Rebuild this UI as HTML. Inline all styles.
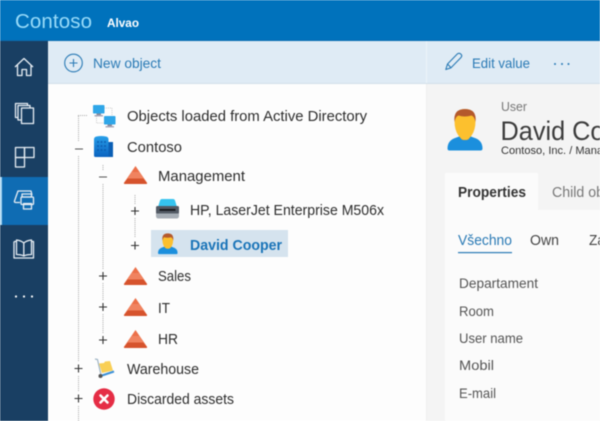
<!DOCTYPE html>
<html><head><meta charset="utf-8"><style>
html,body{margin:0;padding:0;width:600px;height:421px;overflow:hidden;background:#fff}
svg{display:block;filter:blur(.45px)}
text{font-family:"Liberation Sans",sans-serif;fill:#2d2d2d}
</style></head><body>
<svg width="600" height="421" viewBox="0 0 600 421" xmlns="http://www.w3.org/2000/svg">
<defs>
<linearGradient id="bl" x1="0" y1="0" x2="0" y2="1"><stop offset="0" stop-color="#28a0ea"/><stop offset="1" stop-color="#0a62c0"/></linearGradient>
<g id="tr"><path d="M11.500 0 L23 16.800 Q23.500 18 22 18 L1 18 Q-.5 18 0 16.800Z" fill="#ec7049"/><path d="M7.700 6 L15.300 6 L19.500 12.500 L3.500 12.500Z" fill="#f08360"/><path d="M3.800 12.500 L19.200 12.500 L23 17 Q23 18 22 18 L1 18 Q0 18 0 17Z" fill="#d6532d"/></g>
<g id="pm"><path d="M0 0H8M4 -4V4" stroke="#333" stroke-width="1.100" fill="none"/></g>
<g id="mon"><rect x="0" y="0" width="11.500" height="8.500" rx=".8" fill="#2fa6e8"/><rect x="3.500" y="8.500" width="4.500" height="1.500" fill="#889"/><rect x="1.500" y="10" width="8.500" height="1.500" fill="#aab"/></g>
</defs>
<rect width="600" height="421" fill="#fdfdfd"/>
<rect width="600" height="41" fill="#0072bc"/>
<rect y="40" width="600" height="1" fill="#0a6cb0"/>
<text x="15" y="28" font-size="20.500" style="fill:#98dbf9" textLength="77" lengthAdjust="spacing">Contoso</text>
<text x="107" y="27" font-size="12" font-weight="bold" style="fill:#fff" textLength="32" lengthAdjust="spacingAndGlyphs">Alvao</text>

<!-- sidebar -->
<rect y="41" width="48" height="380" fill="#193f63"/>
<rect y="177" width="48" height="48" fill="#0f6cb3"/>
<rect y="177" width="2" height="48" fill="#a9d6f2"/>
<g fill="none" stroke="#e8eef4" stroke-width="1.300" stroke-linejoin="round">
<path d="M15 67 L24 58.500 L33 67 M17.500 65 V75.500 H22 V69.500 H26.500 V75.500 H31 V65"/>
<path d="M18.500 117.500 H15.500 V103.500 H27.500 V105"/>
<path d="M21 120 H18 V105.500 H30 V107.500"/>
<rect x="21.500" y="108" width="12" height="15.500" fill="#193f63"/>
<rect x="15.500" y="147.500" width="9" height="10"/><rect x="24.500" y="147.500" width="9.500" height="10"/><rect x="15.500" y="157.500" width="9" height="9.500"/>
<path d="M14.500 201 L18 191 H31 L32 195 M14.500 201 Q14 202.500 16 202.500 H20"/>
<rect x="21" y="197" width="12.500" height="7.500" rx="1"/><rect x="22" y="194" width="9.500" height="3"/><rect x="23.500" y="203.500" width="8" height="5.500"/>
<path d="M14 241.500 H16 M14 241.500 V258 H33.500 V241.500 H31.500 M23.800 256 V243 Q21 240.500 16.500 240 V254.500 Q21 254.500 23.800 256 Q26.500 254.500 31.500 254.500 V240 Q26.500 240.500 23.800 243"/>
</g>
<circle cx="16" cy="296.500" r="1.100" fill="#fff"/><circle cx="24" cy="296.500" r="1.100" fill="#fff"/><circle cx="32" cy="296.500" r="1.100" fill="#fff"/>

<!-- toolbar -->
<rect x="48" y="41" width="552" height="42" fill="#dfebf5"/>
<rect x="48" y="83" width="552" height="1" fill="#d3e0ea"/>
<rect x="426" y="41" width="1" height="42" fill="#ecf3f9"/>
<circle cx="73.500" cy="63" r="8.800" fill="none" stroke="#2a7ab5" stroke-width="1.100"/>
<path d="M73.500 59V67M69.500 63H77.500" stroke="#2a7ab5" stroke-width="1.100"/>
<text x="93" y="68" font-size="14" style="fill:#2a7ab5" textLength="68" lengthAdjust="spacingAndGlyphs">New object</text>
<path d="M445.800 69.500 L447.500 64 L457.500 53.800 Q459 52.800 460.500 53.800 L461.300 54.600 Q462.300 56 461 57.500 L451 67.800Z M447.500 64 L451 67.800" fill="none" stroke="#2a7ab5" stroke-width="1.100" stroke-linejoin="round"/>
<text x="472" y="68" font-size="14" style="fill:#2a7ab5" textLength="58" lengthAdjust="spacingAndGlyphs">Edit value</text>
<circle cx="555" cy="64" r="1" fill="#2a7ab5"/><circle cx="562" cy="64" r="1" fill="#2a7ab5"/><circle cx="568.500" cy="64" r="1" fill="#2a7ab5"/>

<!-- right panel -->
<rect x="427" y="84" width="173" height="337" fill="#f4f4f4"/>
<rect x="426" y="84" width="1" height="337" fill="#efefef"/>
<rect x="445" y="173" width="93" height="40" fill="#fbfbfb"/>
<rect x="445" y="210" width="155" height="211" fill="#fbfbfb"/>
<g transform="translate(447.500,108)">
<path d="M0 40.500 Q0 32 9 29.500 L13 28 H22 L26 29.500 Q35 32 35 40.500 Q35 42.500 33 42.500 H2 Q0 42.500 0 40.500Z" fill="#1b8fdd"/>
<rect x="13" y="26" width="9" height="6" rx="3" fill="#f2a82c"/>
<path d="M7 13 Q7 1 17.500 1 Q28 1 28 13 Q28 24 22 30 Q17.500 34 13 30 Q7 24 7 13Z" fill="#fcc02e"/>
<path d="M7 14 Q5.500 1 17.500 1 Q29.500 1 28 14 Q27 8.500 24 7.500 Q17 9.500 11 7.500 Q8 8.500 7 14Z" fill="#b4592c"/>
</g>
<text x="501" y="111" font-size="13" style="fill:#777" textLength="26" lengthAdjust="spacingAndGlyphs">User</text>
<text x="500.500" y="140" font-size="26.500" style="fill:#3c3c3c" textLength="104" lengthAdjust="spacingAndGlyphs">David Co</text>
<text x="501" y="154" font-size="11" style="fill:#333" textLength="102" lengthAdjust="spacingAndGlyphs">Contoso, Inc. / Mana</text>
<text x="458" y="197" font-size="14.500" font-weight="bold" style="fill:#333" textLength="68" lengthAdjust="spacingAndGlyphs">Properties</text>
<text x="552" y="197" font-size="14.500" style="fill:#777" textLength="52" lengthAdjust="spacingAndGlyphs">Child ob</text>
<text x="458" y="245" font-size="14.500" style="fill:#2a7ab5" textLength="54" lengthAdjust="spacingAndGlyphs">Všechno</text>
<rect x="458" y="252" width="54" height="1.200" fill="#2a7ab5"/>
<text x="530" y="245" font-size="14.500" style="fill:#444" textLength="29" lengthAdjust="spacingAndGlyphs">Own</text>
<text x="589" y="245" font-size="14.500" style="fill:#444" textLength="16" lengthAdjust="spacingAndGlyphs">Za</text>
<g font-size="14">
<text x="459" y="288" style="fill:#555" textLength="79" lengthAdjust="spacingAndGlyphs">Departament</text>
<text x="459" y="316" style="fill:#555" textLength="35" lengthAdjust="spacingAndGlyphs">Room</text>
<text x="459" y="343" style="fill:#555" textLength="64" lengthAdjust="spacingAndGlyphs">User name</text>
<text x="459" y="370" style="fill:#555" textLength="35" lengthAdjust="spacingAndGlyphs">Mobil</text>
<text x="459" y="398" style="fill:#555" textLength="37" lengthAdjust="spacingAndGlyphs">E-mail</text>
</g>

<!-- tree lines -->
<g stroke="#aaa" stroke-width="1" stroke-dasharray="1 1" fill="none">
<path d="M78.500 116V141M78.500 156V361M78.500 376V391M78.500 406V421M78 115.500H87"/>
<path d="M103 165V170M103 184V269M103 283V300M103 314V333"/>
<path d="M135 195V204M135 218V238"/>
<path d="M104 108H112V116M96.500 116V123H104" stroke="#ccc"/>
</g>
<!-- expanders -->
<path d="M75 149H83M99 177H107" stroke="#555" stroke-width="1.100"/>
<use href="#pm" x="131" y="211"/><use href="#pm" x="131" y="245.500"/>
<use href="#pm" x="99" y="276"/><use href="#pm" x="99" y="307"/><use href="#pm" x="99" y="340"/>
<use href="#pm" x="74.500" y="368.500"/><use href="#pm" x="74.500" y="398.500"/>

<!-- tree icons -->
<use href="#mon" x="93" y="105"/><use href="#mon" x="104" y="116"/>
<path d="M94 155.500 V139.500 Q94 137 96.500 136.500 Q101 135.500 106 136.500 Q108.500 137 108.500 139.500 V142 H113 V157 H95.500 Q94 157 94 155.500Z" fill="url(#bl)"/>
<rect x="108.500" y="142" width="4.500" height="15" fill="#0b5fb5"/>
<g fill="#0a58ad" opacity=".7"><rect x="97" y="141" width="2" height="2"/><rect x="100.500" y="141" width="2" height="2"/><rect x="104" y="141" width="2" height="2"/><rect x="97" y="145" width="2" height="2"/><rect x="100.500" y="145" width="2" height="2"/><rect x="104" y="145" width="2" height="2"/><rect x="97" y="149" width="2" height="2"/><rect x="100.500" y="149" width="2" height="2"/><rect x="104" y="149" width="2" height="2"/></g>
<use href="#tr" x="124" y="166"/>
<use href="#tr" x="124" y="267"/>
<use href="#tr" x="124" y="298"/>
<use href="#tr" x="124" y="330"/>
<!-- printer -->
<path d="M158 207 L160 200.500 Q160.500 199 162 199 H173 Q174.500 199 175 200.500 L177 207Z" fill="#35c3ef"/>
<rect x="156" y="206" width="23" height="8" rx="1.500" fill="#535a65"/>
<rect x="159.500" y="209" width="16" height="1.800" fill="#15181c"/>
<path d="M156 213.500 H179 V216 Q179 218.500 176.500 218.500 H158.500 Q156 218.500 156 216Z" fill="#a6adb5"/>
<!-- selected row -->
<rect x="151" y="230" width="137" height="27" fill="#d5e3ee"/>
<g transform="translate(158,234.500) scale(.56)">
<path d="M0 33 Q0 25 9 22.500 L13 21 H22 L26 22.500 Q35 25 35 33 Q35 35 33 35 H2 Q0 35 0 33Z" fill="#1b8fdd"/>
<path d="M8 10 Q8 -1 17.500 -1 Q27 -1 27 10 Q27 19 22 24 Q17.500 27 13 24 Q8 19 8 10Z" fill="#fcc02e"/>
<path d="M8 11 Q6 -2 17.500 -2 Q29 -2 27 11 Q26 6 23 5 Q17 6.500 11 5 Q9 6 8 11Z" fill="#b4592c"/>
</g>
<!-- warehouse -->
<path d="M95 359 L97.500 359.500 L101 375" stroke="#9eb4c4" stroke-width="1.200" fill="none"/>
<path d="M99 363.500 L104 363 L105 361.500 L110 361 L113 370.500 L102 373Z" fill="#f9cf55"/>
<path d="M100.500 376 L114 371.500" stroke="#3d91d8" stroke-width="2" fill="none"/>
<circle cx="100.500" cy="376" r="2" fill="#555"/>
<!-- discarded -->
<circle cx="104" cy="399" r="10.700" fill="#e52d45"/>
<path d="M100.500 395.500L107.500 402.500M107.500 395.500L100.500 402.500" stroke="#fff" stroke-width="2.600" stroke-linecap="round"/>

<!-- tree text -->
<g font-size="15">
<text x="127" y="121" textLength="240" lengthAdjust="spacingAndGlyphs">Objects loaded from Active Directory</text>
<text x="127" y="152" textLength="55" lengthAdjust="spacingAndGlyphs">Contoso</text>
<text x="158" y="181" textLength="87" lengthAdjust="spacingAndGlyphs">Management</text>
<text x="190" y="215" textLength="194" lengthAdjust="spacingAndGlyphs">HP, LaserJet Enterprise M506x</text>
<text x="190" y="250" font-weight="bold" style="fill:#1a74b8" textLength="92" lengthAdjust="spacingAndGlyphs">David Cooper</text>
<text x="158" y="281" textLength="33" lengthAdjust="spacingAndGlyphs">Sales</text>
<text x="158" y="313" textLength="12" lengthAdjust="spacingAndGlyphs">IT</text>
<text x="158" y="344" textLength="20" lengthAdjust="spacingAndGlyphs">HR</text>
<text x="127" y="374" textLength="72" lengthAdjust="spacingAndGlyphs">Warehouse</text>
<text x="127" y="404" textLength="107" lengthAdjust="spacingAndGlyphs">Discarded assets</text>
</g>
</svg>
</body></html>
